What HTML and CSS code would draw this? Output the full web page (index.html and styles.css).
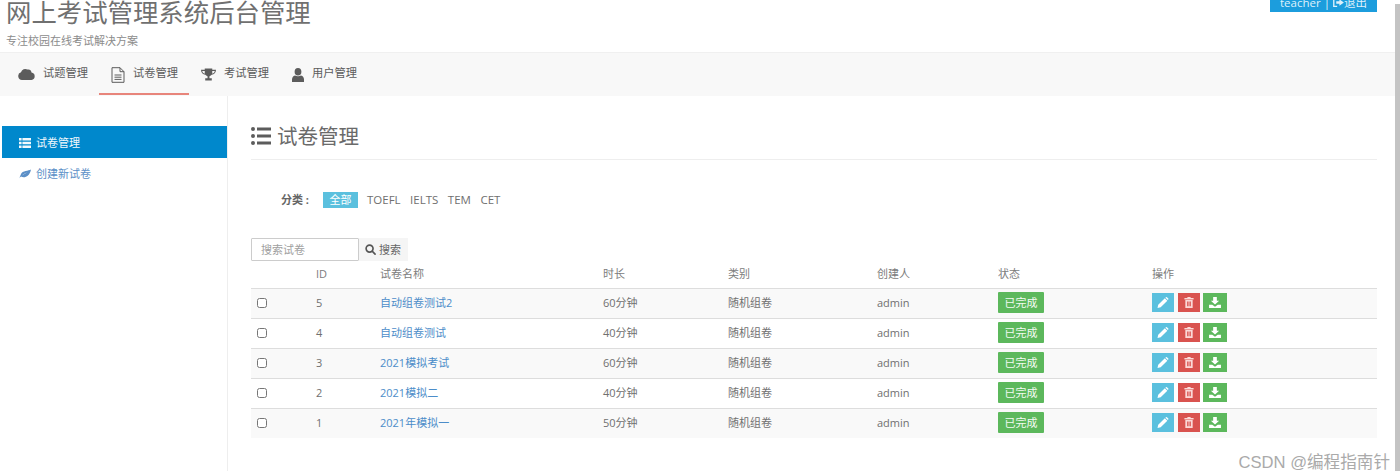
FILE: index.html
```html
<!DOCTYPE html>
<html lang="zh">
<head>
<meta charset="utf-8">
<title>网上考试管理系统后台管理</title>
<link rel="stylesheet" href="styles.css">
</head>
<body>
<svg class="defs" width="0" height="0" aria-hidden="true">
  <symbol id="i-list" viewBox="0 0 20 18"><path d="M0 2a2 2 0 1 1 4 0a2 2 0 1 1-4 0zM0 9a2 2 0 1 1 4 0a2 2 0 1 1-4 0zM0 16a2 2 0 1 1 4 0a2 2 0 1 1-4 0zM6 .5h14v3H6zM6 7.5h14v3H6zM6 14.5h14v3H6z" fill="currentColor"/></symbol>
  <symbol id="i-rows" viewBox="0 0 12 10"><path d="M0 0h2.6v2.4H0zM3.4 0H12v2.4H3.4zM0 3.8h2.6v2.4H0zM3.4 3.8H12v2.4H3.4zM0 7.6h2.6V10H0zM3.4 7.6H12V10H3.4z" fill="currentColor"/></symbol>
  <symbol id="i-leaf" viewBox="0 0 12 10"><path d="M0 9.500C.8 8.500 1.300 8 2 7.500C5 9.500 10.500 8 12 .5C9.500 2.200 3.500 1 1.800 5.500C1.500 6.500.8 8 0 9.500zM3 6.500C4.500 5 6 4.200 8 3.500C6 4.600 4.500 5.600 3 6.500z" fill="currentColor" fill-rule="evenodd"/></symbol>
  <symbol id="i-cloud" viewBox="0 0 17 12"><path d="M4 12a4 4 0 0 1-1-7.800A4.500 4.500 0 0 1 9.500 1.500A3.500 3.500 0 0 1 13.500 4.500A3.800 3.800 0 0 1 13.500 12z" fill="currentColor"/></symbol>
  <symbol id="i-file" viewBox="0 0 14 16"><path d="M1 .7h8l4 4v10.600H1zM9 .7v4h4M3.500 8h7M3.500 10.200h7M3.500 12.400h7" fill="none" stroke="currentColor" stroke-width="1"/></symbol>
  <symbol id="i-trophy" viewBox="0 0 16 13"><path d="M4 0h8v1.500h4c0 3-2 5-4.600 5.300C10.600 7.800 9.500 8.200 9 8.500v2h2.500V13h-7v-2.500H7v-2C6.500 8.200 5.400 7.800 4.600 6.800C2 6.500 0 4.500 0 1.500h4zM1.300 2.700c.2 1.500 1.200 2.500 2.700 2.900V2.700zM14.700 2.700H12v2.900c1.500-.4 2.500-1.400 2.700-2.900z" fill="currentColor"/></symbol>
  <symbol id="i-user" viewBox="0 0 12 14"><path d="M6 0a3.400 3.800 0 1 1 0 7.600a3.400 3.800 0 1 1 0-7.600zM3 7.400C4.500 8.500 7.500 8.500 9 7.400C11 8 12 9.500 12 11.500V14H0v-2.500C0 9.500 1 8 3 7.400z" fill="currentColor"/></symbol>
  <symbol id="i-search" viewBox="0 0 12 12"><path d="M5 1.200a3.800 3.800 0 1 0 0 7.600a3.800 3.800 0 1 0 0-7.600zM7.800 7.800L11 11" fill="none" stroke="currentColor" stroke-width="1.800" stroke-linecap="round"/></symbol>
  <symbol id="i-pencil" viewBox="0 0 12 12"><path d="M0 12l.8-3.500L8 1.300l2.700 2.700L3.500 11.200zM8.800.5L10 0l2 2-.5 1.200-.2.200L8.600.7z" fill="currentColor"/></symbol>
  <symbol id="i-trash" viewBox="0 0 10 12"><path d="M3.500 0h3l.5 1.200h3v1.400H0V1.200h3zM1 3.400h8V12H1zM3 5v5h1V5zM4.500 5v5h1V5zM6 5v5h1V5z" fill="currentColor" fill-rule="evenodd"/></symbol>
  <symbol id="i-down" viewBox="0 0 13 12"><path d="M4.500 0h4v4H11L6.500 8.200L2 4h2.500zM0 8.500h3.500l3 2.200l3-2.200H13V12H0z" fill="currentColor"/></symbol>
  <symbol id="i-out" viewBox="0 0 12 10"><path d="M4.500 0v1.500H1.500v7h3V10H0V0zM7 1.500L12 5L7 8.500V6.500H3.500v-3H7z" fill="currentColor"/></symbol>
</svg>

<header class="top">
  <div class="brand">
    <h1 class="brand-title">网上考试管理系统后台管理</h1>
    <p class="brand-sub">专注校园在线考试解决方案</p>
  </div>
  <div class="userbox">teacher | <svg class="i-out"><use href="#i-out"/></svg> <span>退出</span></div>
</header>

<nav class="nav">
  <a class="nav-item"><svg class="ni ni-cloud"><use href="#i-cloud"/></svg>试题管理</a>
  <a class="nav-item active"><svg class="ni ni-file"><use href="#i-file"/></svg>试卷管理</a>
  <a class="nav-item"><svg class="ni ni-trophy"><use href="#i-trophy"/></svg>考试管理</a>
  <a class="nav-item"><svg class="ni ni-user"><use href="#i-user"/></svg>用户管理</a>
</nav>

<div class="layout">
  <aside class="side">
    <a class="side-item current"><svg class="si"><use href="#i-rows"/></svg>试卷管理</a>
    <a class="side-item"><svg class="si"><use href="#i-leaf"/></svg>创建新试卷</a>
  </aside>
  <main class="content">
    <h2 class="page-title"><svg class="pt-icon"><use href="#i-list"/></svg>试卷管理</h2>
    <div class="filter">
      <b class="filter-label">分类 :</b>
      <span class="tag">全部</span>
      <a class="cat">TOEFL</a><a class="cat">IELTS</a><a class="cat">TEM</a><a class="cat">CET</a>
    </div>
    <div class="search">
      <input class="search-input" type="text" placeholder="搜索试卷">
      <button class="search-btn" type="button"><svg class="i-search"><use href="#i-search"/></svg>搜索</button>
    </div>
    <table class="grid">
      <colgroup>
        <col class="c1"><col class="c2"><col class="c3"><col class="c4"><col class="c5"><col class="c6"><col class="c7"><col class="c8">
      </colgroup>
      <thead>
        <tr><th></th><th>ID</th><th>试卷名称</th><th>时长</th><th>类别</th><th>创建人</th><th>状态</th><th>操作</th></tr>
      </thead>
      <tbody>
        <tr><td><input class="chk" type="checkbox"></td><td>5</td><td><a class="link">自动组卷测试2</a></td><td>60分钟</td><td>随机组卷</td><td>admin</td><td><span class="done">已完成</span></td><td><div class="ops"><span class="op blue"><svg class="oi"><use href="#i-pencil"/></svg></span><span class="op red"><svg class="oi"><use href="#i-trash"/></svg></span><span class="op green"><svg class="oi"><use href="#i-down"/></svg></span></div></td></tr>
        <tr><td><input class="chk" type="checkbox"></td><td>4</td><td><a class="link">自动组卷测试</a></td><td>40分钟</td><td>随机组卷</td><td>admin</td><td><span class="done">已完成</span></td><td><div class="ops"><span class="op blue"><svg class="oi"><use href="#i-pencil"/></svg></span><span class="op red"><svg class="oi"><use href="#i-trash"/></svg></span><span class="op green"><svg class="oi"><use href="#i-down"/></svg></span></div></td></tr>
        <tr><td><input class="chk" type="checkbox"></td><td>3</td><td><a class="link">2021模拟考试</a></td><td>60分钟</td><td>随机组卷</td><td>admin</td><td><span class="done">已完成</span></td><td><div class="ops"><span class="op blue"><svg class="oi"><use href="#i-pencil"/></svg></span><span class="op red"><svg class="oi"><use href="#i-trash"/></svg></span><span class="op green"><svg class="oi"><use href="#i-down"/></svg></span></div></td></tr>
        <tr><td><input class="chk" type="checkbox"></td><td>2</td><td><a class="link">2021模拟二</a></td><td>40分钟</td><td>随机组卷</td><td>admin</td><td><span class="done">已完成</span></td><td><div class="ops"><span class="op blue"><svg class="oi"><use href="#i-pencil"/></svg></span><span class="op red"><svg class="oi"><use href="#i-trash"/></svg></span><span class="op green"><svg class="oi"><use href="#i-down"/></svg></span></div></td></tr>
        <tr><td><input class="chk" type="checkbox"></td><td>1</td><td><a class="link">2021年模拟一</a></td><td>50分钟</td><td>随机组卷</td><td>admin</td><td><span class="done">已完成</span></td><td><div class="ops"><span class="op blue"><svg class="oi"><use href="#i-pencil"/></svg></span><span class="op red"><svg class="oi"><use href="#i-trash"/></svg></span><span class="op green"><svg class="oi"><use href="#i-down"/></svg></span></div></td></tr>
      </tbody>
    </table>
  </main>
</div>

<div class="scrollbar"></div>
<div class="watermark">CSDN @编程指南针</div>
</body>
</html>
```
FILE: styles.css
```css
* { box-sizing: border-box; }
html, body { height: 100%; }
body {
  margin: 0;
  height: 471px;
  overflow: hidden;
  background: #fff;
  color: #6f6f6f;
  font: 11px/16px "Open Sans", "Noto Sans CJK SC", sans-serif;
  position: relative;
}
.defs { position: absolute; }
svg { display: block; flex: none; }

.top {
  height: 53px;
  display: flex;
  justify-content: space-between;
  align-items: flex-start;
  padding: 0 23px 0 6px;
  border-bottom: 1px solid #f0f0f0;
}
.brand-title {
  margin: 0;
  font-size: 25.4px;
  line-height: 24px;
  font-weight: 400;
  color: #707070;
}
.brand-sub {
  margin: 9px 0 0;
  font-size: 11px;
  line-height: 16px;
  color: #8c8c8c;
}
.userbox {
  width: 107px;
  height: 12px;
  background: #1c9ddd;
  color: #dff1fb;
  font-size: 11.5px;
  line-height: 6px;
  display: flex;
  justify-content: center;
  white-space: pre;
  overflow: hidden;
}
.i-out { width: 11px; height: 9px; margin-top: -2px; }

.nav {
  height: 43px;
  background: #f8f8f8;
  display: flex;
  padding-left: 6px;
}
.nav-item {
  display: flex;
  align-items: center;
  gap: 8px;
  height: 42px;
  padding: 0 11px 0 12px;
  border-bottom: 2px solid transparent;
  font-size: 11.25px;
  color: #5c5c5c;
}
.nav-item.active { border-bottom-color: #e8857b; }
.ni { color: #5c5c5c; }
.ni-cloud { width: 17px; height: 12px; margin-top: 1px; }
.ni-file { width: 14px; height: 16px; margin-top: 3px; }
.ni-trophy { width: 15px; height: 13px; margin-top: 3px; }
.ni-user { width: 12px; height: 14px; margin-top: 3px; }

.layout { display: flex; height: 375px; }
.side {
  width: 228px;
  padding: 30px 0 0 2px;
  border-right: 1px solid #eee;
  flex: none;
}
.side-item {
  height: 32px;
  display: flex;
  align-items: center;
  gap: 5px;
  padding-left: 17px;
  color: #5b8fc7;
}
.side-item.current { padding-top: 1px; background: #0088cc; color: #f2f9fd; }
.si { width: 12px; height: 10px; }

.content { width: 1149px; padding-left: 23px; flex: none; }
.page-title {
  margin: 0;
  height: 64px;
  padding: 24px 0 7px;
  border-bottom: 1px solid #eee;
  display: flex;
  align-items: center;
  gap: 6px;
  font-size: 20.5px;
  font-weight: 400;
  line-height: 32px;
  color: #6a6a6a;
}
.pt-icon { width: 20px; height: 18px; color: #5c5c5c; }

.filter {
  display: flex;
  align-items: center;
  margin-top: 32px;
  height: 16px;
  padding-left: 30px;
}
.filter-label { width: 42px; font-weight: 700; color: #666; }
.tag {
  width: 35px;
  height: 16px;
  background: #5bc0de;
  color: #fff;
  text-align: center;
  margin-right: 9px;
}
.cat { margin-right: 9.5px; font-size: 11.5px; color: #6f6f6f; }

.search { display: flex; margin-top: 30px; height: 23px; }
.search-input {
  width: 108px;
  height: 23px;
  border: 1px solid #ccc;
  border-radius: 1px;
  padding: 0 9px;
  font: inherit;
  outline: none;
  background: #fff;
}
.search-input::placeholder { color: #a0a0a0; opacity: 1; }
.search-btn {
  width: 49px;
  height: 23px;
  border: 0;
  padding: 0 0 0 6px;
  background: #f5f5f5;
  color: #666;
  font: inherit;
  display: flex;
  align-items: center;
  gap: 3px;
}
.i-search { width: 11px; height: 11px; color: #555; }

.grid { width: 1126px; table-layout: fixed; border-collapse: collapse; }
.c1 { width: 59px; }
.c2 { width: 64px; }
.c3 { width: 223px; }
.c4 { width: 125px; }
.c5 { width: 149px; }
.c6 { width: 121px; }
.c7 { width: 154px; }
.c8 { width: 231px; }
.grid th {
  height: 27px;
  padding: 0 0 0 6px;
  font-weight: 400;
  text-align: left;
  color: #7c7c7c;
}
.grid td {
  height: 30px;
  padding: 0 0 0 6px;
  border-top: 1px solid #ddd;
  color: #707070;
}
.grid tbody tr:nth-child(odd) td { background: #f9f9f9; }
.chk { display: block; width: 10px; height: 10px; margin: 0 0 1px; }
.link { color: #4c8dc9; }
.done {
  display: block;
  width: 46px;
  height: 21px;
  margin-bottom: 1px;
  background: #5cb85c;
  color: #f4fbf4;
  text-align: center;
  line-height: 21px;
  border-radius: 1px;
}
.ops { display: flex; gap: 4px; margin-bottom: 1px; }
.op {
  width: 22px;
  height: 19px;
  display: flex;
  align-items: center;
  justify-content: center;
  color: #fff;
}
.op.green { width: 24px; margin-left: -1px; }
.blue { background: #5bc0de; }
.red { background: #d9534f; color: #fbd9d7; }
.green { background: #5cb85c; }
.oi { width: 12px; height: 11px; }

.scrollbar {
  position: absolute;
  top: 4px;
  right: 0;
  bottom: 0;
  width: 5px;
  background: #c4c4c4;
}
.watermark {
  position: absolute;
  right: 10px;
  bottom: 0;
  font: 16.6px/16px "Liberation Sans", "Noto Sans CJK SC", sans-serif;
  color: #aaa;
}
```
